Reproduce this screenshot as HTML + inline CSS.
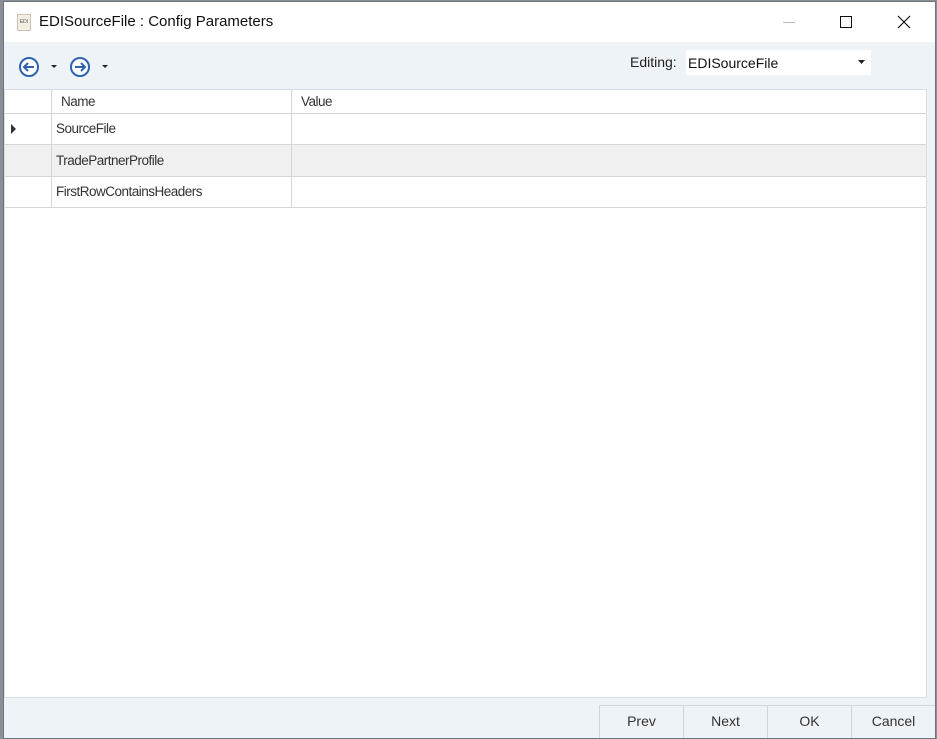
<!DOCTYPE html><html><head><style>
body{margin:0;width:937px;height:739px;background:#8a8f96;position:relative;overflow:hidden;font-family:"Liberation Sans",sans-serif;}
.win{position:absolute;left:3px;top:1px;width:931px;height:736px;background:#eef3f8;border:1px solid #6d7680;}
.abs{position:absolute}
.title{left:0;top:0;width:931px;height:40px;background:#fff}
.grid{left:0;top:87px;width:921px;height:607px;background:#fff;border:1px solid #d7dde3}
.row{position:absolute;left:0;width:921px;border-bottom:1px solid #d6d6d6;font-size:13.5px;color:#333;letter-spacing:-0.5px}
.c1{position:absolute;left:46px;top:0;bottom:0;border-left:1px solid #d6d6d6;padding-left:4px}
.c2{position:absolute;left:286px;top:0;bottom:0;border-left:1px solid #d6d6d6;padding-left:8px}
.btn{position:absolute;top:703px;width:83px;height:32px;background:#eef3f8;border-left:1px solid #d0d6dc;border-top:1px solid #d0d6dc;font-size:14px;color:#333;text-align:center;line-height:31px}
</style></head><body>
<div class="win">
<div class="abs title">
 <div class="abs" style="left:13px;top:12px;width:12px;height:15px;background:#f1ede0;border:1px solid #c9c3b0;font-size:5px;line-height:15px;text-align:center;color:#555">EDI</div>
 <div class="abs" style="left:35px;top:11px;font-size:15px;color:#111">EDISourceFile : Config Parameters</div>
 <div class="abs" style="left:779px;top:20px;width:12px;height:1px;background:#bbb"></div>
 <div class="abs" style="left:836px;top:14px;width:10px;height:10px;border:1.3px solid #111"></div>
 <svg class="abs" style="left:893px;top:13px" width="14" height="14"><path d="M1 1L13 13M13 1L1 13" stroke="#111" stroke-width="1.2"/></svg>
</div>
<svg class="abs" style="left:13px;top:53px" width="100" height="24">
 <circle cx="12" cy="12" r="9" fill="#fff" stroke="#2f63b0" stroke-width="2"/>
 <path d="M17 12H8M11 8L7 12L11 16" stroke="#2f63b0" stroke-width="2" fill="none"/>
 <path d="M34 10h6l-3 3z" fill="#222"/>
 <circle cx="63" cy="12" r="9" fill="#fff" stroke="#2f63b0" stroke-width="2"/>
 <path d="M58 12H67M64 8L68 12L64 16" stroke="#2f63b0" stroke-width="2" fill="none"/>
 <path d="M85 10h6l-3 3z" fill="#222"/>
</svg>
<div class="abs" style="left:626px;top:52px;font-size:14px;color:#222">Editing:</div>
<div class="abs" style="left:682px;top:48px;width:185px;height:25px;background:#fff"><span class="abs" style="left:2px;top:5px;font-size:14px;color:#111">EDISourceFile</span><svg class="abs" style="left:172px;top:10px" width="8" height="5"><path d="M0 0h7l-3.5 4z" fill="#222"/></svg></div>
<div class="abs grid">
 <div class="row" style="top:0;height:23px;background:#fff"><div class="c1" style="line-height:23px;padding-left:9px">Name</div><div class="c2" style="line-height:23px;padding-left:9px">Value</div></div>
 <div class="row" style="top:24px;height:30px"><svg class="abs" style="left:6px;top:10px" width="6" height="10"><path d="M0 0L5 5L0 10z" fill="#333"/></svg><div class="c1" style="line-height:30px">SourceFile</div><div class="c2"></div></div>
 <div class="row" style="top:55px;height:31px;background:#f0f0f0"><div class="c1" style="line-height:31px">TradePartnerProfile</div><div class="c2"></div></div>
 <div class="row" style="top:87px;height:30px"><div class="c1" style="line-height:30px">FirstRowContainsHeaders</div><div class="c2"></div></div>
</div>
<div class="btn" style="left:595px">Prev</div>
<div class="btn" style="left:679px">Next</div>
<div class="btn" style="left:763px">OK</div>
<div class="btn" style="left:847px">Cancel</div>
</div>
</body></html>
